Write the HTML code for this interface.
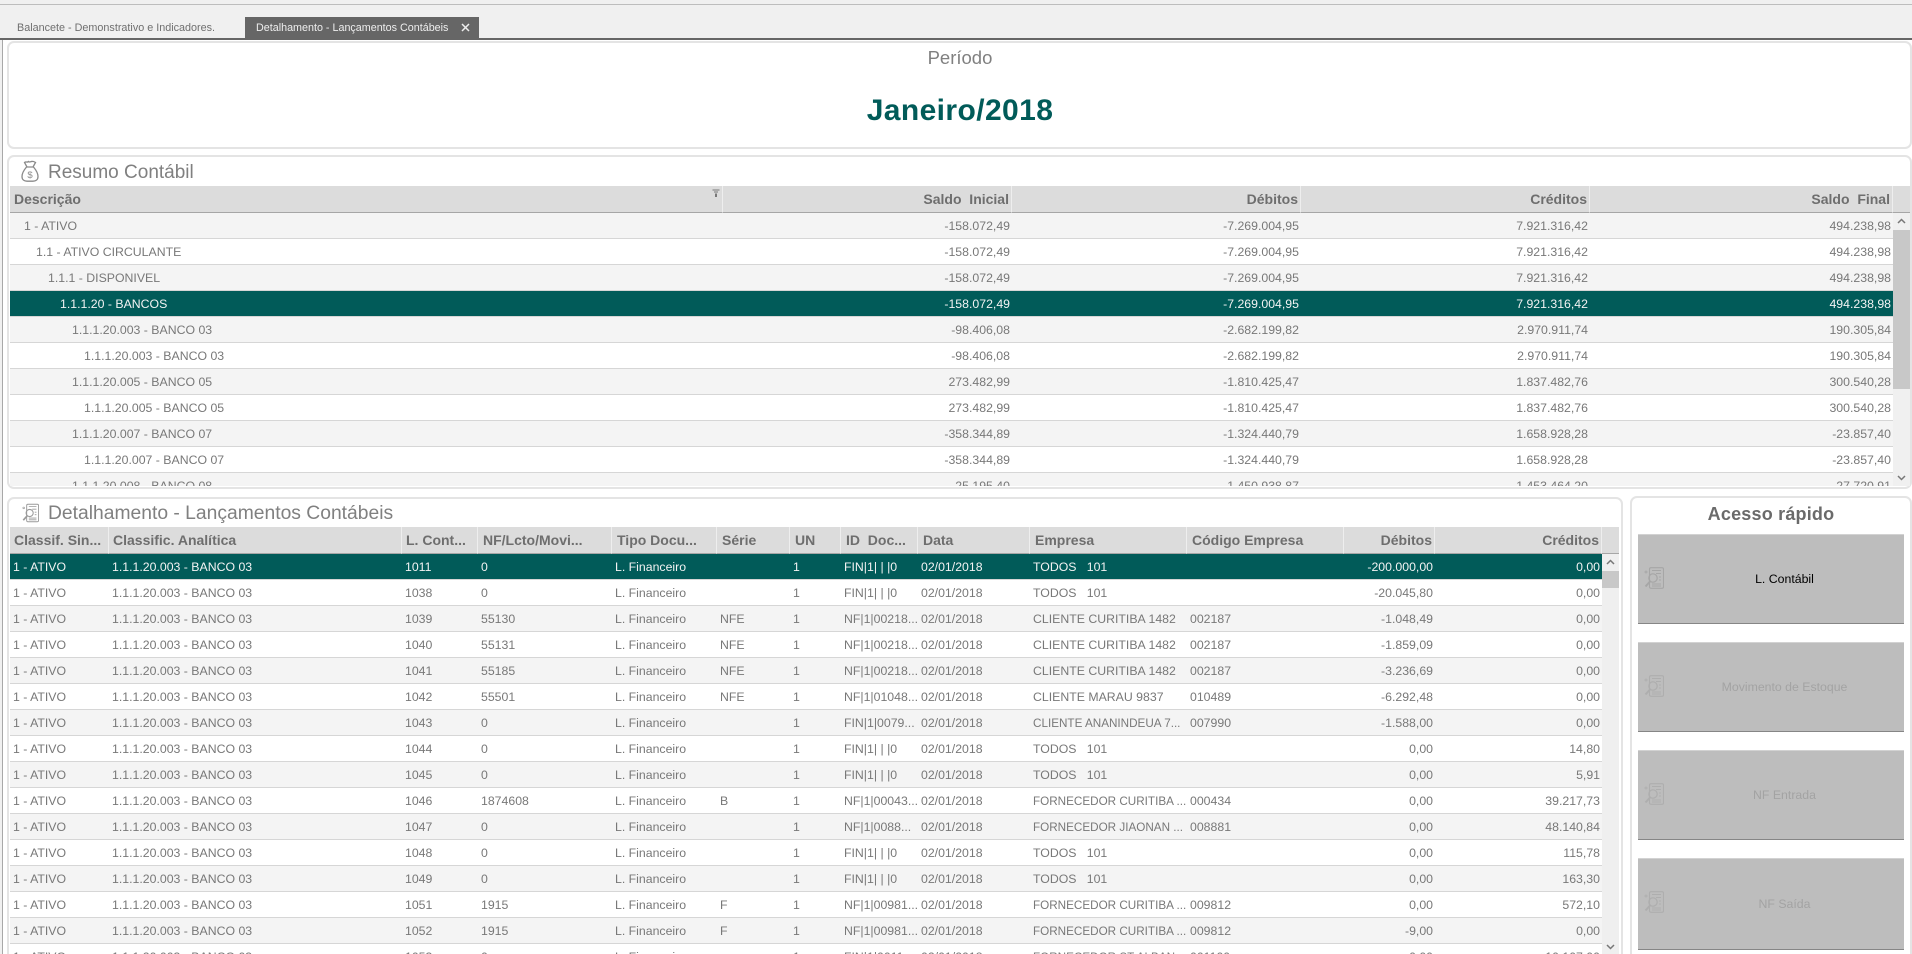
<!DOCTYPE html>
<html lang="pt-BR">
<head>
<meta charset="utf-8">
<title>Detalhamento - Lançamentos Contábeis</title>
<style>
html,body{margin:0;padding:0;width:1912px;height:954px;overflow:hidden;background:#fff;font-family:"Liberation Sans",Arial,sans-serif;color:#777}
#root{position:relative;width:1912px;height:954px;overflow:hidden;background:#fff}
.a{position:absolute}
.panel{position:absolute;box-sizing:border-box;border:2px solid #e4e4e4;border-radius:7px;background:#fff}
table{border-collapse:separate;border-spacing:0;table-layout:fixed;position:absolute;left:0;top:0}
th{height:26px;line-height:26px;padding:0 0 0 4px;background:#dcdcdc;border-bottom:1px solid #a6a6a6;border-right:1px solid #eeeeee;box-sizing:content-box;font-size:14px;font-weight:bold;color:#6e6e6e;text-align:left;white-space:nowrap;overflow:hidden}
th:nth-child(n+4){padding-left:5px}
td{height:23px;line-height:23px;padding:2px 0 0 3px;border-bottom:1px solid #d6d6d6;font-size:12.3px;color:#787878;white-space:nowrap;overflow:hidden;background:#fff}
tr.g td{background:#f4f4f4}
tr.s td{background:#015b59;color:#f3f3f3}
td.r{text-align:right;padding:2px 2px 0 0}
th.r{text-align:right;padding:0 2px 0 0}
td.n{font-size:11.7px}
.tt{position:absolute;font-size:19px;line-height:24px;color:#808080;white-space:nowrap}
.btn{position:absolute;left:1638px;width:266px;box-sizing:border-box;background:#bdbdbd;border-top:1px solid #d2d2d2;border-bottom:1px solid #868686}
.btn span{position:absolute;left:0;width:293px;text-align:center;font-size:12.3px;color:#a3a3a3;top:50%;margin-top:-8px;line-height:16px;white-space:nowrap}
.btn svg{position:absolute;left:6px;top:32px}
</style>
</head>
<body>
<svg width="0" height="0" style="position:absolute">
<symbol id="doc" viewBox="0 0 20 22">
<rect x="5.5" y="0.7" width="14" height="20.6" rx="1.5" fill="none" stroke="currentColor" stroke-width="1.1"/>
<path d="M8 3.5h9M12 6.5h5M15 10h2M15 13h2M8 17h9M8 19h9" fill="none" stroke="currentColor" stroke-width="1"/>
<circle cx="9" cy="11" r="4.2" fill="none" stroke="currentColor" stroke-width="1.2"/>
<path d="M6 14.5L1.5 19.5" fill="none" stroke="currentColor" stroke-width="2"/>
<circle cx="2" cy="5" r="1" fill="none" stroke="currentColor" stroke-width=".8"/>
</symbol>
</svg>
<div id="root">

<!-- top bar -->
<div class="a" style="left:0;top:0;width:1912px;height:38px;background:#f0f0f0"></div>
<div class="a" style="left:0;top:4px;width:1912px;height:1px;background:#bdbdbd"></div>
<div class="a" style="left:0;top:38px;width:1912px;height:2px;background:#666"></div>
<div class="a" style="left:17px;top:20px;font-size:10.8px;line-height:16px;color:#6f6f6f;white-space:nowrap">Balancete - Demonstrativo e Indicadores.</div>
<div class="a" style="left:245px;top:17px;width:234px;height:21px;background:#666"></div>
<div class="a" style="left:256px;top:20px;font-size:10.75px;line-height:16px;color:#eee;white-space:nowrap">Detalhamento - Lançamentos Contábeis</div>
<svg class="a" style="left:461px;top:23px" width="9" height="9" viewBox="0 0 9 9"><path d="M1 1L8 8M8 1L1 8" stroke="#eee" stroke-width="1.5" fill="none"/></svg>
<!-- left stripe -->
<div class="a" style="left:0;top:40px;width:2px;height:914px;background:#f0f0f0"></div>
<div class="a" style="left:2px;top:40px;width:1px;height:914px;background:#a8a8a8"></div>

<!-- period -->
<div class="panel" style="left:7px;top:41px;width:1905px;height:108px"></div>
<div class="a" style="left:760px;width:400px;top:46px;text-align:center;font-size:18.5px;line-height:24px;color:#808080">Período</div>
<div class="a" style="left:760px;width:400px;top:93px;text-align:center;font-size:30px;font-weight:bold;line-height:36px;letter-spacing:.4px;color:#015b59">Janeiro/2018</div>

<!-- resumo -->
<div class="panel" style="left:7px;top:155px;width:1905px;height:334px"></div>
<svg class="a" style="left:21px;top:160px" width="18" height="22" viewBox="0 0 18 22" fill="none" stroke="#8a8a8a" stroke-width="1.3"><path d="M5.5 7C3 10 1 13 1 16.5 1 20 3.5 21.2 6 21.2h6c2.5 0 5-1.200 5-4.700C17 13 15 10 12.500 7"/><path d="M5 7h8M6 7L3.500 2.500C5 1 6 3 7.500 1.500 9 3 10 1 11 1.500 12.500 1 13.500 2 14.500 2.500L12 7"/><text x="9" y="18" font-size="9.5" font-family="Liberation Sans" text-anchor="middle" fill="#8a8a8a" stroke="none">$</text></svg>
<div class="tt" style="left:48px;top:161px">Resumo Contábil</div>

<div class="a" style="left:10px;top:186px;width:1900px;height:300px;overflow:hidden;background:#fff">
<table style="width:1883px">
<colgroup><col style="width:713px"><col style="width:289px"><col style="width:289px"><col style="width:289px"><col style="width:303px"></colgroup>
<tr><th>Descrição</th><th class="r">Saldo&nbsp; Inicial</th><th class="r">Débitos</th><th class="r">Créditos</th><th class="r">Saldo&nbsp; Final</th></tr>
<tr class="g"><td style="padding-left:14px">1 - ATIVO</td><td class="r">-158.072,49</td><td class="r">-7.269.004,95</td><td class="r">7.921.316,42</td><td class="r">494.238,98</td></tr>
<tr><td style="padding-left:26px">1.1 - ATIVO CIRCULANTE</td><td class="r">-158.072,49</td><td class="r">-7.269.004,95</td><td class="r">7.921.316,42</td><td class="r">494.238,98</td></tr>
<tr class="g"><td style="padding-left:38px">1.1.1 - DISPONIVEL</td><td class="r">-158.072,49</td><td class="r">-7.269.004,95</td><td class="r">7.921.316,42</td><td class="r">494.238,98</td></tr>
<tr class="s"><td style="padding-left:50px">1.1.1.20 - BANCOS</td><td class="r">-158.072,49</td><td class="r">-7.269.004,95</td><td class="r">7.921.316,42</td><td class="r">494.238,98</td></tr>
<tr class="g"><td style="padding-left:62px">1.1.1.20.003 - BANCO 03</td><td class="r">-98.406,08</td><td class="r">-2.682.199,82</td><td class="r">2.970.911,74</td><td class="r">190.305,84</td></tr>
<tr><td style="padding-left:74px">1.1.1.20.003 - BANCO 03</td><td class="r">-98.406,08</td><td class="r">-2.682.199,82</td><td class="r">2.970.911,74</td><td class="r">190.305,84</td></tr>
<tr class="g"><td style="padding-left:62px">1.1.1.20.005 - BANCO 05</td><td class="r">273.482,99</td><td class="r">-1.810.425,47</td><td class="r">1.837.482,76</td><td class="r">300.540,28</td></tr>
<tr><td style="padding-left:74px">1.1.1.20.005 - BANCO 05</td><td class="r">273.482,99</td><td class="r">-1.810.425,47</td><td class="r">1.837.482,76</td><td class="r">300.540,28</td></tr>
<tr class="g"><td style="padding-left:62px">1.1.1.20.007 - BANCO 07</td><td class="r">-358.344,89</td><td class="r">-1.324.440,79</td><td class="r">1.658.928,28</td><td class="r">-23.857,40</td></tr>
<tr><td style="padding-left:74px">1.1.1.20.007 - BANCO 07</td><td class="r">-358.344,89</td><td class="r">-1.324.440,79</td><td class="r">1.658.928,28</td><td class="r">-23.857,40</td></tr>
<tr class="g"><td style="padding-left:62px">1.1.1.20.008 - BANCO 08</td><td class="r">25.195,40</td><td class="r">-1.450.938,87</td><td class="r">1.453.464,20</td><td class="r">27.720,91</td></tr>
</table>
</div>
<div class="a" style="left:1893px;top:186px;width:17px;height:26px;background:#dcdcdc;border-bottom:1px solid #a6a6a6"></div>
<div class="a" style="left:1893px;top:213px;width:17px;height:273px;background:#f0f0f0"></div>
<div class="a" style="left:1893px;top:230px;width:17px;height:159px;background:#c8c8c8"></div>
<svg class="a" style="left:1897px;top:218px" width="9" height="6" viewBox="0 0 9 6"><path d="M1 5L4.5 1.5 8 5" stroke="#777" stroke-width="1.5" fill="none"/></svg>
<svg class="a" style="left:1897px;top:475px" width="9" height="6" viewBox="0 0 9 6"><path d="M1 1L4.5 4.5 8 1" stroke="#777" stroke-width="1.5" fill="none"/></svg>
<svg class="a" style="left:712px;top:189px" width="8" height="8" viewBox="0 0 8 8"><path d="M.5 1h7M2 3h4M3.500 5h1v2.500h-1z" stroke="#777" stroke-width="1" fill="none"/></svg>

<!-- detalhamento -->
<div class="panel" style="left:7px;top:497px;width:1616px;height:480px"></div>
<svg class="a" style="left:22px;top:503px;color:#9a9a9a" width="17" height="20"><use href="#doc"/></svg>
<div class="tt" style="left:48px;top:502px;font-size:19.3px">Detalhamento - Lançamentos Contábeis</div>

<div class="a" style="left:10px;top:527px;width:1609px;height:427px;overflow:hidden;background:#fff">
<table style="width:1592px">
<colgroup><col style="width:99px"><col style="width:293px"><col style="width:76px"><col style="width:134px"><col style="width:105px"><col style="width:73px"><col style="width:51px"><col style="width:77px"><col style="width:112px"><col style="width:157px"><col style="width:157px"><col style="width:91px"><col style="width:167px"></colgroup>
<tr><th>Classif. Sin...</th><th>Classific. Analítica</th><th>L. Cont...</th><th>NF/Lcto/Movi...</th><th>Tipo Docu...</th><th>Série</th><th>UN</th><th>ID&nbsp; Doc...</th><th>Data</th><th>Empresa</th><th>Código Empresa</th><th class="r">Débitos</th><th class="r">Créditos</th></tr>
<tr class="s"><td>1 - ATIVO</td><td>1.1.1.20.003 - BANCO 03</td><td>1011</td><td>0</td><td>L. Financeiro</td><td></td><td>1</td><td>FIN|1| | |0</td><td>02/01/2018</td><td>TODOS &nbsp; 101</td><td></td><td class="r">-200.000,00</td><td class="r">0,00</td></tr>
<tr><td>1 - ATIVO</td><td>1.1.1.20.003 - BANCO 03</td><td>1038</td><td>0</td><td>L. Financeiro</td><td></td><td>1</td><td>FIN|1| | |0</td><td>02/01/2018</td><td>TODOS &nbsp; 101</td><td></td><td class="r">-20.045,80</td><td class="r">0,00</td></tr>
<tr class="g"><td>1 - ATIVO</td><td>1.1.1.20.003 - BANCO 03</td><td>1039</td><td>55130</td><td>L. Financeiro</td><td>NFE</td><td>1</td><td>NF|1|00218...</td><td>02/01/2018</td><td>CLIENTE CURITIBA 1482</td><td>002187</td><td class="r">-1.048,49</td><td class="r">0,00</td></tr>
<tr><td>1 - ATIVO</td><td>1.1.1.20.003 - BANCO 03</td><td>1040</td><td>55131</td><td>L. Financeiro</td><td>NFE</td><td>1</td><td>NF|1|00218...</td><td>02/01/2018</td><td>CLIENTE CURITIBA 1482</td><td>002187</td><td class="r">-1.859,09</td><td class="r">0,00</td></tr>
<tr class="g"><td>1 - ATIVO</td><td>1.1.1.20.003 - BANCO 03</td><td>1041</td><td>55185</td><td>L. Financeiro</td><td>NFE</td><td>1</td><td>NF|1|00218...</td><td>02/01/2018</td><td>CLIENTE CURITIBA 1482</td><td>002187</td><td class="r">-3.236,69</td><td class="r">0,00</td></tr>
<tr><td>1 - ATIVO</td><td>1.1.1.20.003 - BANCO 03</td><td>1042</td><td>55501</td><td>L. Financeiro</td><td>NFE</td><td>1</td><td>NF|1|01048...</td><td>02/01/2018</td><td>CLIENTE MARAU 9837</td><td>010489</td><td class="r">-6.292,48</td><td class="r">0,00</td></tr>
<tr class="g"><td>1 - ATIVO</td><td>1.1.1.20.003 - BANCO 03</td><td>1043</td><td>0</td><td>L. Financeiro</td><td></td><td>1</td><td>FIN|1|0079...</td><td>02/01/2018</td><td class="n">CLIENTE ANANINDEUA 7...</td><td>007990</td><td class="r">-1.588,00</td><td class="r">0,00</td></tr>
<tr><td>1 - ATIVO</td><td>1.1.1.20.003 - BANCO 03</td><td>1044</td><td>0</td><td>L. Financeiro</td><td></td><td>1</td><td>FIN|1| | |0</td><td>02/01/2018</td><td>TODOS &nbsp; 101</td><td></td><td class="r">0,00</td><td class="r">14,80</td></tr>
<tr class="g"><td>1 - ATIVO</td><td>1.1.1.20.003 - BANCO 03</td><td>1045</td><td>0</td><td>L. Financeiro</td><td></td><td>1</td><td>FIN|1| | |0</td><td>02/01/2018</td><td>TODOS &nbsp; 101</td><td></td><td class="r">0,00</td><td class="r">5,91</td></tr>
<tr><td>1 - ATIVO</td><td>1.1.1.20.003 - BANCO 03</td><td>1046</td><td>1874608</td><td>L. Financeiro</td><td>B</td><td>1</td><td>NF|1|00043...</td><td>02/01/2018</td><td class="n">FORNECEDOR CURITIBA ...</td><td>000434</td><td class="r">0,00</td><td class="r">39.217,73</td></tr>
<tr class="g"><td>1 - ATIVO</td><td>1.1.1.20.003 - BANCO 03</td><td>1047</td><td>0</td><td>L. Financeiro</td><td></td><td>1</td><td>NF|1|0088...</td><td>02/01/2018</td><td class="n">FORNECEDOR JIAONAN ...</td><td>008881</td><td class="r">0,00</td><td class="r">48.140,84</td></tr>
<tr><td>1 - ATIVO</td><td>1.1.1.20.003 - BANCO 03</td><td>1048</td><td>0</td><td>L. Financeiro</td><td></td><td>1</td><td>FIN|1| | |0</td><td>02/01/2018</td><td>TODOS &nbsp; 101</td><td></td><td class="r">0,00</td><td class="r">115,78</td></tr>
<tr class="g"><td>1 - ATIVO</td><td>1.1.1.20.003 - BANCO 03</td><td>1049</td><td>0</td><td>L. Financeiro</td><td></td><td>1</td><td>FIN|1| | |0</td><td>02/01/2018</td><td>TODOS &nbsp; 101</td><td></td><td class="r">0,00</td><td class="r">163,30</td></tr>
<tr><td>1 - ATIVO</td><td>1.1.1.20.003 - BANCO 03</td><td>1051</td><td>1915</td><td>L. Financeiro</td><td>F</td><td>1</td><td>NF|1|00981...</td><td>02/01/2018</td><td class="n">FORNECEDOR CURITIBA ...</td><td>009812</td><td class="r">0,00</td><td class="r">572,10</td></tr>
<tr class="g"><td>1 - ATIVO</td><td>1.1.1.20.003 - BANCO 03</td><td>1052</td><td>1915</td><td>L. Financeiro</td><td>F</td><td>1</td><td>NF|1|00981...</td><td>02/01/2018</td><td class="n">FORNECEDOR CURITIBA ...</td><td>009812</td><td class="r">-9,00</td><td class="r">0,00</td></tr>
<tr><td>1 - ATIVO</td><td>1.1.1.20.003 - BANCO 03</td><td>1053</td><td>0</td><td>L. Financeiro</td><td></td><td>1</td><td>FIN|1|0011...</td><td>02/01/2018</td><td class="n">FORNECEDOR ST ALBAN...</td><td>001100</td><td class="r">0,00</td><td class="r">10.107,00</td></tr>
</table>
</div>
<div class="a" style="left:1602px;top:527px;width:17px;height:26px;background:#dcdcdc;border-bottom:1px solid #a6a6a6"></div>
<div class="a" style="left:1602px;top:554px;width:17px;height:400px;background:#efefef"></div>
<div class="a" style="left:1602px;top:571px;width:17px;height:17px;background:#c8c8c8"></div>
<svg class="a" style="left:1606px;top:559px" width="9" height="6" viewBox="0 0 9 6"><path d="M1 5L4.5 1.5 8 5" stroke="#777" stroke-width="1.5" fill="none"/></svg>
<svg class="a" style="left:1606px;top:944px" width="9" height="6" viewBox="0 0 9 6"><path d="M1 1L4.5 4.5 8 1" stroke="#777" stroke-width="1.5" fill="none"/></svg>

<!-- acesso rapido -->
<div class="panel" style="left:1630px;top:496px;width:282px;height:480px"></div>
<div class="a" style="left:1630px;width:282px;top:503px;text-align:center;font-size:18px;font-weight:bold;letter-spacing:.2px;line-height:22px;color:#6a6a6a">Acesso rápido</div>

<div class="btn" style="top:534px;height:90px"><svg style="color:#a6a6a6" width="20" height="22"><use href="#doc"/></svg><span style="color:#000">L. Contábil</span></div>
<div class="btn" style="top:642px;height:90px"><svg style="color:#aeaeae" width="20" height="22"><use href="#doc"/></svg><span>Movimento de Estoque</span></div>
<div class="btn" style="top:750px;height:90px"><svg style="color:#aeaeae" width="20" height="22"><use href="#doc"/></svg><span>NF Entrada</span></div>
<div class="btn" style="top:858px;height:92px"><svg style="color:#aeaeae" width="20" height="22"><use href="#doc"/></svg><span>NF Saída</span></div>
</div>
</body>
</html>
